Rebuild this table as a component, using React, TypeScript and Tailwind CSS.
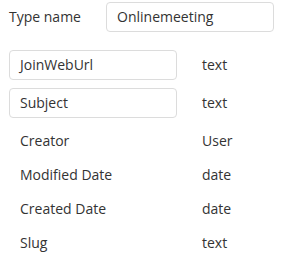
import React from "react";

const boxRows = [
  { name: "JoinWebUrl", type: "text" },
  { name: "Subject", type: "text" },
];

const plainRows = [
  { name: "Creator", type: "User" },
  { name: "Modified Date", type: "date" },
  { name: "Created Date", type: "date" },
  { name: "Slug", type: "text" },
];

export default function App() {
  return (
    <div
      className="w-[282px] h-[262px] bg-white text-[14px] leading-[20px] text-[#333333] pl-[9px] pt-[2px]"
      style={{ fontFamily: '"Open Sans", sans-serif' }}
    >
      <div className="flex items-center h-[30px]">
        <div className="w-[97px]">Type name</div>
        <div className="w-[168px] h-[30px] border border-[#dcdcdc] rounded-[4px] pl-[10px] flex items-center">
          Onlinemeeting
        </div>
      </div>
      <div className="mt-[18px] flex flex-col gap-[8px]">
        {boxRows.map((r) => (
          <div key={r.name} className="flex items-center h-[30px]">
            <div className="w-[168px] h-[30px] border border-[#dcdcdc] rounded-[4px] pl-[10px] flex items-center">
              {r.name}
            </div>
            <div className="ml-[25px]">{r.type}</div>
          </div>
        ))}
      </div>
      <div className="mt-[6px] flex flex-col">
        {plainRows.map((r) => (
          <div key={r.name} className="flex items-center h-[34px]">
            <div className="w-[193px] pl-[11px]">{r.name}</div>
            <div>{r.type}</div>
          </div>
        ))}
      </div>
    </div>
  );
}
